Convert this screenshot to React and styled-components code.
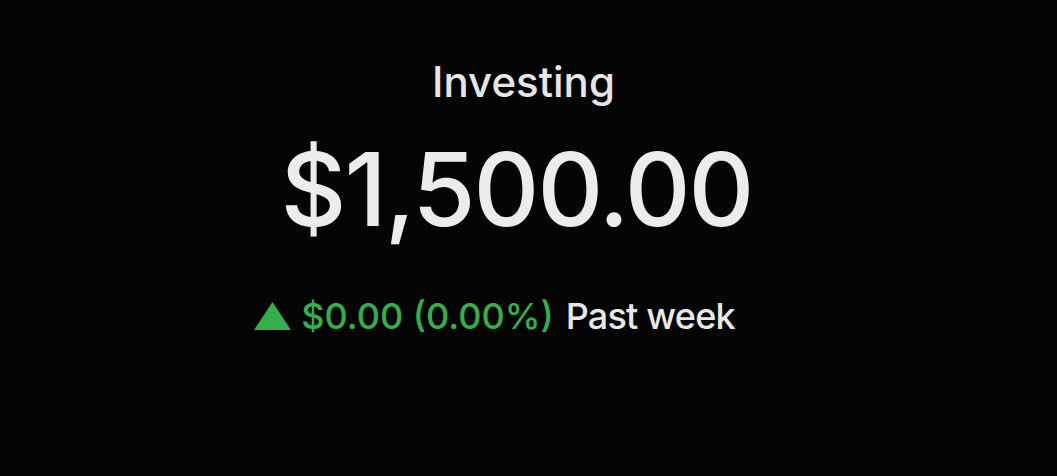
import React from "react";
import styled, { createGlobalStyle } from "styled-components";

const Global = createGlobalStyle`
  html, body { margin: 0; padding: 0; background: #050505; }
  body { font-family: Inter, "Liberation Sans", sans-serif; }
`;

const Page = styled.main`
  width: 1057px;
  height: 476px;
  background: #050505;
  display: flex;
  flex-direction: column;
  align-items: center;
  box-sizing: border-box;
  padding-top: 56px;
`;

const Label = styled.h2`
  margin: 0;
  font-size: 42px;
  font-weight: 500;
  line-height: 52px;
  color: #e6e6e6;
  padding-right: 10px;
`;

const Amount = styled.h1`
  margin: 26px 0 0;
  font-size: 102px;
  font-weight: 500;
  line-height: 110px;
  letter-spacing: -2px;
  color: #ececec;
  padding-right: 24px;
`;

const ChangeRow = styled.div`
  margin-top: 50px;
  display: flex;
  align-items: center;
  gap: 10px;
  font-size: 36px;
  font-weight: 500;
  line-height: 44px;
  padding-right: 68px;
`;

const Up = styled.svg`
  width: 37px;
  height: 28px;
  flex: none;
`;

const Delta = styled.span`
  color: #37ae4c;
`;

const Period = styled.span`
  color: #e8e8e8;
  margin-left: 12px;
  letter-spacing: -0.8px;
`;

export default function App() {
  return (
    <>
      <Global />
      <Page>
        <Label>Investing</Label>
        <Amount>$1,500.00</Amount>
        <ChangeRow>
          <Up viewBox="0 0 37 28">
            <polygon points="18.5,0 37,28 0,28" fill="#37ae4c" />
          </Up>
          <span>
            <Delta>$0.00 (0.00%)</Delta>
            <Period>Past week</Period>
          </span>
        </ChangeRow>
      </Page>
    </>
  );
}
